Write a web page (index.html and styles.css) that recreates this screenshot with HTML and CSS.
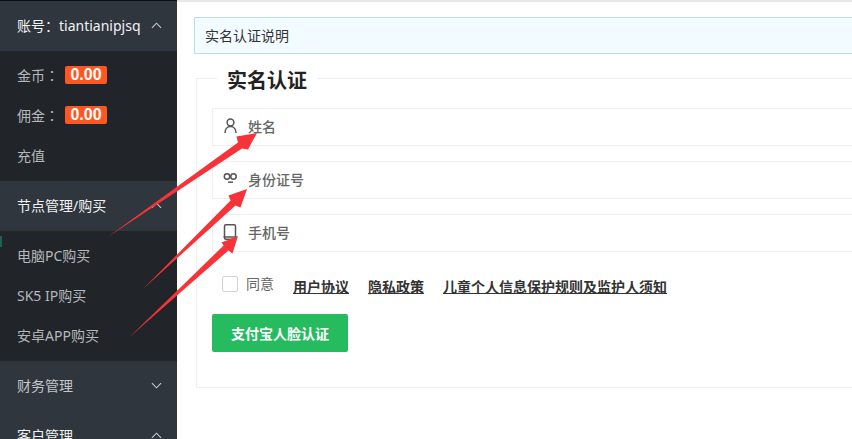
FILE: index.html
```html
<!DOCTYPE html>
<html lang="zh-CN">
<head>
    <meta charset="UTF-8">
    <meta name="viewport" content="width=device-width, initial-scale=1.0">
    <title>实名认证</title>
    <link rel="stylesheet" href="styles.css">
</head>
<body>
    <div class="page">
        <div class="sidebar">
            <div class="menu-head">
                <span>账号<span class="colon">：</span>tiantianipjsq</span>
                <svg class="chevron" viewBox="0 0 12 7"><polyline points="1,6 6,1 11,6"/></svg>
            </div>
            <div class="submenu">
                <div class="menu-item">金币<span class="colon">：</span><span class="badge">0.00</span></div>
                <div class="menu-item">佣金<span class="colon">：</span><span class="badge">0.00</span></div>
                <div class="menu-item">充值</div>
            </div>
            <div class="menu-head">
                <span>节点管理/购买</span>
                <svg class="chevron" viewBox="0 0 12 7"><polyline points="1,6 6,1 11,6"/></svg>
            </div>
            <div class="submenu">
                <span class="active-mark"></span>
                <div class="menu-item">电脑PC购买</div>
                <div class="menu-item">SK5 IP购买</div>
                <div class="menu-item">安卓APP购买</div>
            </div>
            <div class="menu-head dim">
                <span>财务管理</span>
                <svg class="chevron" viewBox="0 0 12 7"><polyline points="1,1 6,6 11,1"/></svg>
            </div>
            <div class="menu-head">
                <span>客户管理</span>
                <svg class="chevron" viewBox="0 0 12 7"><polyline points="1,6 6,1 11,6"/></svg>
            </div>
        </div>

        <div class="main">
            <div class="notice">实名认证说明</div>
            <fieldset class="form-box">
                <legend>实名认证</legend>
                <div class="field">
                    <svg class="field-icon" viewBox="0 0 16 16">
                        <circle cx="7.5" cy="4.5" r="3.4"/>
                        <path d="M2 15c0-3.600 2-6.500 5.500-6.500S13 11.400 13 15"/>
                    </svg>
                    <span>姓名</span>
                </div>
                <div class="field">
                    <svg class="field-icon" viewBox="0 0 16 16">
                        <circle cx="4" cy="5.500" r="2.700"/>
                        <circle cx="10.500" cy="5.500" r="2.700"/>
                        <path d="M5 11.200h5"/>
                    </svg>
                    <span>身份证号</span>
                </div>
                <div class="field">
                    <svg class="field-icon" viewBox="0 0 16 16">
                        <rect x="1.500" y="0.800" width="11" height="14.400" rx="1.500"/>
                        <path d="M0.500 13h13"/>
                    </svg>
                    <span>手机号</span>
                </div>
                <div class="agree-row">
                    <span class="checkbox"></span>
                    <span class="agree-label">同意</span>
                    <a class="agree-link" href="#">用户协议</a>
                    <a class="agree-link" href="#">隐私政策</a>
                    <a class="agree-link" href="#">儿童个人信息保护规则及监护人须知</a>
                </div>
                <button class="submit">支付宝人脸认证</button>
            </fieldset>
        </div>

        <!-- red arrows drawn over the screenshot -->
        <svg class="arrows" viewBox="0 0 852 439">
            <polygon points="107,237.500 242,148.400 248,149.500 257,133 236.500,136.500 238,142.600"/>
            <polygon points="143,289 235.400,205.500 240.500,207.500 247,189 228.500,195.500 230.600,200.500"/>
            <polygon points="129,337.500 228.400,250.500 232.500,253.500 238,236 221.500,242.500 223.600,245.500"/>
        </svg>
    </div>
</body>
</html>
```

FILE: styles.css
```css
* {
    box-sizing: border-box;
}
html, body {
    margin: 0;
    height: 100%;
    overflow: hidden;
}
body {
    font-family: "Noto Sans", "Noto Sans CJK SC", sans-serif;
    font-size: 14px;
    background-color: #fff;
}
.page {
    position: relative;
    display: flex;
    height: 439px;
    overflow: hidden;
}
.sidebar {
    flex: 0 0 177px;
    height: 439px;
    overflow: hidden;
    background-color: #2f363e;
    border-top: 1px solid #0c0d0e;
}
.menu-head {
    display: flex;
    align-items: center;
    justify-content: space-between;
    height: 50px;
    padding: 0 15px 2px 17px;
    color: #f2f2f2;
}
.menu-head.dim {
    color: #c2c5c8;
}
.colon {
    font-family: "Noto Sans CJK TC", sans-serif;
}
.chevron {
    width: 11px;
    height: 7px;
    fill: none;
    stroke: #c8cbce;
    stroke-width: 1.2;
}
.submenu {
    position: relative;
    height: 130px;
    padding-top: 4px;
    background-color: #212529;
}
.active-mark {
    position: absolute;
    left: 0;
    top: 5px;
    width: 2px;
    height: 11px;
    background-color: #1f5f5a;
}
.menu-item {
    display: flex;
    align-items: center;
    height: 40px;
    padding-left: 17px;
    color: #b5b8ba;
}
.badge {
    width: 42px;
    height: 18px;
    margin-left: 6px;
    border-radius: 2px;
    background-color: #ff5722;
    color: #fff;
    font-family: "Liberation Sans", sans-serif;
    font-size: 16px;
    font-weight: bold;
    line-height: 18px;
    text-align: center;
}
.main {
    flex: 1;
    min-width: 0;
    padding: 15px 0 0 17px;
    border-top: 2px solid #e8e8e8;
    overflow: hidden;
}
.notice {
    width: 720px;
    height: 37px;
    padding-left: 10px;
    border: 1px solid #bfdde5;
    background-color: #f2fbff;
    color: #333;
    line-height: 35px;
}
.form-box {
    width: 720px;
    height: 327px;
    margin: 7px 0 0 2px;
    padding: 0 0 0 15px;
    border: 1px solid #eee;
}
.form-box legend {
    margin-left: 5px;
    padding: 6px 10px 0;
    color: #222;
    font-size: 20px;
    font-weight: bold;
    line-height: 28px;
}
.field {
    display: flex;
    align-items: center;
    height: 38px;
    margin-bottom: 15px;
    padding: 0 0 2px 10px;
    border: 1px solid #eee;
    color: #666;
    font-weight: 500;
}
.field:first-of-type {
    margin-top: 13px;
}
.field-icon {
    flex: none;
    width: 16px;
    height: 16px;
    margin-right: 9px;
    fill: none;
    stroke: #555;
    stroke-width: 1.5;
}
.agree-row {
    display: flex;
    align-items: center;
    margin: 24px 0 20px 10px;
    height: 18px;
}
.checkbox {
    width: 16px;
    height: 16px;
    margin-top: -3px;
    border: 1px solid #d2d2d2;
    border-radius: 2px;
}
.agree-label {
    margin: -5px 19px 0 8px;
    color: #666;
}
.agree-link {
    margin: 1px 19px 0 0;
    color: #333;
    font-weight: bold;
}
.submit {
    display: block;
    width: 136px;
    height: 38px;
    padding: 0;
    border: 0;
    border-radius: 2px;
    background-color: #26bb5f;
    color: #fff;
    font-family: inherit;
    font-size: 14px;
    font-weight: bold;
}
.arrows {
    position: absolute;
    left: 0;
    top: 0;
    width: 852px;
    height: 439px;
    fill: #f53338;
    pointer-events: none;
}
```
